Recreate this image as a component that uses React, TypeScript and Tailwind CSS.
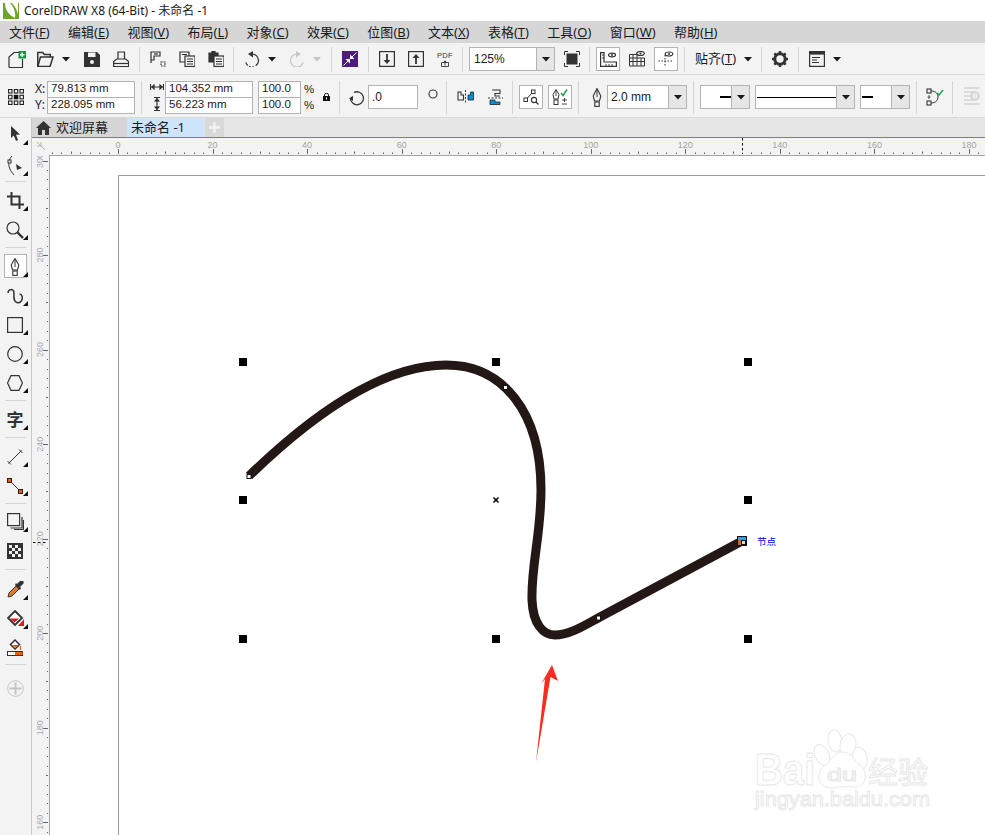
import type { ReactNode } from "react";

const MENUS = [
  ["文件", "F"],
  ["编辑", "E"],
  ["视图", "V"],
  ["布局", "L"],
  ["对象", "C"],
  ["效果", "C"],
  ["位图", "B"],
  ["文本", "X"],
  ["表格", "T"],
  ["工具", "O"],
  ["窗口", "W"],
  ["帮助", "H"],
];

const INK = "#333333";

function Ic({ w = 16, h = 16, className = "", children }: { w?: number; h?: number; className?: string; children: ReactNode }) {
  return (
    <svg width={w} height={h} viewBox={`0 0 ${w} ${h}`} fill="none" stroke={INK} strokeWidth="1.2" className={`shrink-0 ${className}`}>
      {children}
    </svg>
  );
}

function Caret({ className = "", light = false }: { className?: string; light?: boolean }) {
  return (
    <svg width="8" height="5" viewBox="0 0 8 5" className={`shrink-0 ${className}`}>
      <polygon points="0,0 8,0 4,4.5" fill={light ? "#c4c4c4" : "#1a1a1a"} />
    </svg>
  );
}

function VSep({ className = "" }: { className?: string }) {
  return <div className={`h-[25px] w-px shrink-0 bg-[#d4d4d4] ${className}`} />;
}

function VSepTall({ className = "" }: { className?: string }) {
  return <div className={`h-[33px] w-px shrink-0 bg-[#d4d4d4] ${className}`} />;
}

function Combo({ width, btn, className = "", children }: { width: string; btn: string; className?: string; children: ReactNode }) {
  return (
    <div className={`flex h-[24px] shrink-0 border border-[#b3b3b3] bg-white ${width} ${className}`}>
      <div className="flex min-w-0 flex-1 items-center overflow-hidden">{children}</div>
      <div className={`flex items-center justify-center border-l border-[#b3b3b3] bg-[#e6e6e6] ${btn}`}>
        <Caret />
      </div>
    </div>
  );
}

function Boxed({ className = "", children }: { className?: string; children: ReactNode }) {
  return (
    <div className={`flex h-[24px] w-[24px] shrink-0 items-center justify-center border border-[#b3b3b3] bg-white ${className}`}>
      {children}
    </div>
  );
}

function Field({ width, children }: { width: string; children: ReactNode }) {
  return (
    <div className={`flex h-[17px] items-center border border-[#b3b3b3] bg-white pl-[3px] font-['Liberation_Sans',sans-serif] text-[11.5px] leading-none ${width}`}>
      {children}
    </div>
  );
}

function TopToolbar() {
  return (
    <div className="flex h-[32px] shrink-0 items-center border-b border-[#d9d9d9] bg-[#f3f3f3] pt-[1px]">
      <Ic w={18} h={17} className="ml-[8px]">
        <path d="M1 16.5V6l5-4.5h5M14.5 8v8.5H1" />
        <rect x="10.5" y="0" width="7.5" height="7.5" fill="#0b9b3e" stroke="none" />
        <path d="M14.2 1.5v4.5M12 3.7h4.5" stroke="#fff" strokeWidth="1.4" />
      </Ic>
      <Ic w={17} h={16} className="ml-[11px]">
        <path d="M.8 15.5V1.5h5l1.5 2h6v2.5" strokeWidth="1.5" />
        <path d="M.8 15.5 3.5 6h12.5l-3 9.5z" strokeWidth="1.5" />
      </Ic>
      <Caret className="ml-[8px]" />
      <Ic className="ml-[14px]">
        <path d="M0 1h13l3 3v12H0z" fill={INK} stroke="none" />
        <rect x="4" y="1.5" width="7.5" height="4.5" fill="#f3f3f3" stroke="none" />
        <circle cx="8" cy="11" r="2" fill="#f3f3f3" stroke="none" />
      </Ic>
      <Ic className="ml-[13px]">
        <path d="M5 8V1h6.5v7M.6 15.5v-5l3-2.5h9l3 2.5v5z" />
        <path d="M.6 12.5h15" />
      </Ic>
      <VSep className="ml-[10px]" />
      <Ic className="ml-[10px]">
        <path d="M1 1h9v4H4v4H1zM1 9v3" />
        <path d="M4 3h4" />
        <path d="M11 11h4v4h-4z" strokeDasharray="1.6 1" />
      </Ic>
      <Ic className="ml-[13px]">
        <path d="M1 1h9v10H1z" />
        <rect x="6" y="5" width="10" height="10.5" fill="#f3f3f3" />
        <path d="M8 8h6M8 10.5h6M8 13h6M3 3.5h5" />
      </Ic>
      <Ic className="ml-[13px]">
        <path d="M1 2h3V.5h3V2h3v9H1z" fill={INK} />
        <rect x="6" y="5" width="10" height="10.5" fill="#f3f3f3" />
        <path d="M8 8h6M8 10.5h6M8 13h6" />
      </Ic>
      <VSep className="ml-[9px]" />
      <Ic className="ml-[10px]">
        <path d="M8 3a6.5 6.5 0 1 1-6.2 8.5" strokeDasharray="16 2 1.6 1.6 1.6 1.6" />
        <polygon points="9,0 4,3 9,6.5" fill={INK} stroke="none" />
      </Ic>
      <Caret className="ml-[8px]" />
      <Ic className="ml-[13px]">
        <g stroke="#c6c6c6">
          <path d="M8 3a6.5 6.5 0 1 0 6.2 8.5" />
        </g>
        <polygon points="7,0 12,3 7,6.5" fill="#c6c6c6" stroke="none" />
      </Ic>
      <Caret light className="ml-[8px]" />
      <VSep className="ml-[10px]" />
      <svg width="16" height="16" viewBox="0 0 16 16" className="ml-[10px] shrink-0">
        <rect width="16" height="16" fill="#4d1c7c" />
        <path d="M1.5 14.5 14.5 1.5" stroke="#fff" strokeWidth="1" />
        <path d="M8 3.5V8h4.5zM8 12.5V8H3.5z" fill="#fff" />
      </svg>
      <VSep className="ml-[10px]" />
      <Ic className="ml-[10px]">
        <rect x=".6" y=".6" width="14.8" height="14.8" />
        <path d="M8 3v7" strokeWidth="1.8" />
        <polygon points="4.5,9 11.5,9 8,13" fill={INK} stroke="none" />
      </Ic>
      <Ic className="ml-[13px]">
        <rect x=".6" y=".6" width="14.8" height="14.8" />
        <path d="M8 6v7" strokeWidth="1.8" />
        <polygon points="4.5,7 11.5,7 8,3" fill={INK} stroke="none" />
      </Ic>
      <div className="ml-[13px] flex w-[16px] shrink-0 flex-col items-center">
        <span className="font-['Liberation_Sans',sans-serif] text-[7.5px] leading-[9px] tracking-[0.4px] text-[#333]">PDF</span>
        <Ic w={8} h={7}>
          <path d="M.5 2.5h7v4h-7zM4 .5v5M2 3l2-2 2 2" strokeWidth=".9" />
        </Ic>
      </div>
      <VSep className="ml-[9px]" />
      <Combo width="w-[86px]" btn="w-[18px]" className="ml-[6px]">
        <span className="pl-[4px] font-['Liberation_Sans',sans-serif] text-[12px]">125%</span>
      </Combo>
      <svg width="16" height="16" viewBox="0 0 16 16" className="ml-[9px] shrink-0" fill="none" stroke={INK}>
        <path d="M.5 4V.5H4M12 .5h3.5V4M15.5 12v3.5H12M4 15.5H.5V12" />
        <rect x="2.5" y="2.5" width="11" height="11" fill={INK} stroke="none" />
      </svg>
      <VSep className="ml-[9px]" />
      <Boxed className="ml-[6px]">
        <Ic w={17} h={15}>
          <path d="M.6.6h3.4v9.4h12.4v4.4H.6z" />
          <path d="M2 3h2M2 6h2M6 12v2M9 12v2M12 12v2" strokeWidth=".9" />
          <ellipse cx="12" cy="3" rx="3.5" ry="1.8" />
          <circle cx="12" cy="3" r="1" fill={INK} stroke="none" />
        </Ic>
      </Boxed>
      <Ic w={16} h={16} className="ml-[9px]">
        <path d="M.5 3.5h9M.5 7h15M.5 10.5h15M.5 15h15M.5 3.5V15M4 3.5V15M8 3.5V15M12 7V15M15.5 7V15" strokeWidth="1" />
        <ellipse cx="11.5" cy="2.5" rx="3.8" ry="2" fill="#f3f3f3" />
        <circle cx="11.5" cy="2.5" r="1" fill={INK} stroke="none" />
      </Ic>
      <Boxed className="ml-[9px]">
        <Ic w={16} h={16}>
          <path d="M.5 10h15M7 4v12" strokeDasharray="1.5 1.5" strokeWidth="1" />
          <ellipse cx="11" cy="3" rx="3.8" ry="2" />
          <circle cx="11" cy="3" r="1" fill={INK} stroke="none" />
        </Ic>
      </Boxed>
      <VSep className="ml-[6px]" />
      <span className="ml-[10px] w-[41px] shrink-0 text-[13px] whitespace-nowrap">
        贴齐(<span className="underline">T</span>)
      </span>
      <Caret className="ml-[8px]" />
      <VSep className="ml-[9px]" />
      <svg width="16" height="16" viewBox="0 0 16 16" className="ml-[10px] shrink-0">
        <circle cx="8" cy="8" r="5.2" fill="none" stroke="#333" strokeWidth="3" />
        <path d="M8 0v3M8 13v3M0 8h3M13 8h3M2.3 2.3l2.2 2.2M11.5 11.5l2.2 2.2M13.7 2.3l-2.2 2.2M4.5 11.5l-2.2 2.2" stroke="#333" strokeWidth="2.4" />
      </svg>
      <VSep className="ml-[10px]" />
      <Ic className="ml-[10px]">
        <rect x=".6" y=".6" width="14.8" height="14.8" />
        <rect x=".6" y=".6" width="14.8" height="3" fill={INK} stroke="none" />
        <path d="M3 6.5h8M3 9h5M3 11.5h7" />
      </Ic>
      <Caret className="ml-[8px]" />
    </div>
  );
}

function PropertyBar() {
  return (
    <div className="flex h-[43px] shrink-0 items-center overflow-hidden border-b border-[#d9d9d9] bg-[#f3f3f3] pt-[2px]">
      <svg width="16" height="16" viewBox="0 0 16 16" className="ml-[8px] shrink-0">
        <g fill="none" stroke="#222" strokeWidth="1.1">
          <rect x=".5" y=".5" width="3.5" height="3.5" />
          <rect x="6.3" y=".5" width="3.5" height="3.5" />
          <rect x="12" y=".5" width="3.5" height="3.5" />
          <rect x=".5" y="6.3" width="3.5" height="3.5" />
          <rect x="12" y="6.3" width="3.5" height="3.5" />
          <rect x=".5" y="12" width="3.5" height="3.5" />
          <rect x="6.3" y="12" width="3.5" height="3.5" />
          <rect x="12" y="12" width="3.5" height="3.5" />
        </g>
        <rect x="5.8" y="5.8" width="4.5" height="4.5" fill="#111" />
      </svg>
      <div className="ml-[11px] flex w-[12px] shrink-0 flex-col text-[12px] leading-[16px]">
        <span>X:</span>
        <span>Y:</span>
      </div>
      <div className="flex shrink-0 flex-col">
        <Field width="w-[88px]">79.813 mm</Field>
        <Field width="w-[88px] -mt-px">228.095 mm</Field>
      </div>
      <VSepTall className="ml-[6px]" />
      <div className="ml-[8px] flex w-[14px] shrink-0 flex-col items-center gap-[7px]">
        <Ic w={14} h={6}>
          <path d="M.5 0v6M13.5 0v6M1 3h12" />
          <path d="M2 3l2-2v4zM12 3l-2-2v4z" fill={INK} />
        </Ic>
        <Ic w={6} h={14}>
          <path d="M0 .5h6M0 13.5h6M3 1v12" />
          <path d="M3 2 1 4h4zM3 12 1 10h4z" fill={INK} />
        </Ic>
      </div>
      <div className="ml-[1px] flex shrink-0 flex-col">
        <Field width="w-[88px]">104.352 mm</Field>
        <Field width="w-[88px] -mt-px">56.223 mm</Field>
      </div>
      <div className="ml-[5px] flex shrink-0 flex-col">
        <Field width="w-[43px]">100.0</Field>
        <Field width="w-[43px] -mt-px">100.0</Field>
      </div>
      <div className="ml-[3px] flex w-[10px] shrink-0 flex-col font-['Liberation_Sans',sans-serif] text-[11.5px] leading-[16px]">
        <span>%</span>
        <span>%</span>
      </div>
      <svg width="7" height="8" viewBox="0 0 7 8" className="ml-[9px] shrink-0">
        <rect y="3" width="7" height="5" fill="#111" />
        <path d="M1.5 3.5V1.8a2 1.5 0 0 1 4 0V3.5" fill="none" stroke="#111" />
        <rect x="3" y="4.5" width="1" height="2" fill="#fff" />
      </svg>
      <VSepTall className="ml-[9px]" />
      <Ic w={17} h={17} className="ml-[9px]">
        <path d="M5 3.5a6.5 6.5 0 1 1-3.5 6" strokeWidth="1.3" />
        <polygon points="0,9.5 4,6.8 4,12" fill={INK} stroke="none" />
      </Ic>
      <div className="ml-[2px] flex h-[24px] w-[50px] shrink-0 items-center border border-[#b3b3b3] bg-white pl-[3px] font-['Liberation_Sans',sans-serif] text-[12px]">.0</div>
      <svg width="10" height="10" viewBox="0 0 10 10" className="mb-[7px] ml-[10px] shrink-0">
        <circle cx="5" cy="5" r="4" fill="none" stroke="#333" strokeWidth="1.1" />
      </svg>
      <VSepTall className="ml-[8px]" />
      <Ic w={17} h={16} className="ml-[10px]">
        <path d="M1 3h3v3h2.5v5H1z" strokeWidth="1.1" />
        <path d="M8.5 1v14" strokeDasharray="2 1.5" strokeWidth="1" />
        <path d="M11 11V6h2.500V3h3v8z" fill="#0a8fdc" stroke="#222" strokeWidth=".8" />
      </Ic>
      <Ic w={17} h={16} className="ml-[13px]">
        <path d="M5 1h8v3.5H8V7h5" strokeWidth="1.1" />
        <path d="M1 9h15" strokeDasharray="2 1.5" strokeWidth="1" />
        <path d="M3 11h5v2h5v2.5H3z" fill="#0a8fdc" stroke="#222" strokeWidth=".8" />
      </Ic>
      <VSepTall className="ml-[8px]" />
      <Boxed className="ml-[6px]">
        <Ic w={16} h={16}>
          <rect x="1" y="9" width="3.5" height="3.5" strokeWidth="1" />
          <rect x="8.5" y="1" width="3.5" height="3.5" strokeWidth="1" />
          <path d="M4.5 9 8.5 4.5" strokeWidth="1" />
          <circle cx="11" cy="11" r="2.6" strokeWidth="1.1" />
          <path d="M13 13l2.500 2.500" strokeWidth="1.3" />
        </Ic>
      </Boxed>
      <Boxed className="ml-[5px]">
        <Ic w={18} h={18}>
          <path d="M5 1.5 8 6.5 7 11H3L2 6.5z" strokeWidth="1" />
          <path d="M5 2v6" strokeWidth=".9" />
          <rect x="3" y="12" width="4" height="4.5" strokeWidth="1" />
          <path d="M10 5l2 2.500 4-6" stroke="#13a04a" strokeWidth="1.4" />
          <path d="M11 12h5M13.5 10v4M11 16h5" strokeWidth=".9" />
        </Ic>
      </Boxed>
      <VSepTall className="ml-[6px]" />
      <Ic w={10} h={19} className="ml-[13px]">
        <path d="M5 .5 8.8 8 7.5 13h-5L1.2 8z" strokeWidth="1.1" />
        <path d="M5 2v7" strokeWidth="1" />
        <rect x="2.8" y="14" width="4.4" height="4.4" strokeWidth="1.1" />
      </Ic>
      <Combo width="w-[80px]" btn="w-[18px]" className="ml-[5px]">
        <span className="pl-[3px] font-['Liberation_Sans',sans-serif] text-[12px] whitespace-nowrap">2.0 mm</span>
      </Combo>
      <VSepTall className="ml-[6px]" />
      <Combo width="w-[50px]" btn="w-[18px]" className="ml-[6px]">
        <div className="ml-auto h-[2px] w-[11px] bg-black" />
      </Combo>
      <Combo width="w-[100px]" btn="w-[18px]" className="ml-[5px]">
        <div className="ml-[1px] h-[1px] w-full bg-black" />
      </Combo>
      <Combo width="w-[50px]" btn="w-[18px]" className="ml-[5px]">
        <div className="ml-[1px] h-[2px] w-[11px] bg-black" />
      </Combo>
      <VSepTall className="ml-[6px]" />
      <Ic w={18} h={18} className="ml-[9px]">
        <rect x="1" y="1" width="4" height="4" strokeWidth="1.1" />
        <rect x="1" y="13" width="4" height="4" strokeWidth="1.1" />
        <path d="M5 3c5 0 7 3 7 6s-2 6-7 6" strokeWidth="1" />
        <path d="M3 7v4M1.5 9h3" strokeWidth=".8" />
        <path d="M11 5l2 2 4-5" stroke="#13a04a" strokeWidth="1.4" />
      </Ic>
      <VSepTall className="ml-[8px]" />
      <div className="relative ml-[10px] h-[20px] w-[21px] shrink-0">
        <svg width="21" height="20" viewBox="0 0 21 20" fill="none" stroke="#c4c4c4" strokeWidth="1.1">
          <path d="M1 1h16M1 5h10M1 9h7M1 13h10M1 17h16" />
          <circle cx="12" cy="9" r="4" fill="#e8e8e8" />
        </svg>
      </div>
    </div>
  );
}

function Tool({ corner = true, className = "", children }: { corner?: boolean; className?: string; children: ReactNode }) {
  return (
    <div className={`relative flex h-[29px] shrink-0 items-center justify-center pr-[1px] ${className}`}>
      {children}
      {corner && (
        <svg width="5" height="5" viewBox="0 0 5 5" className="absolute right-[3px] bottom-[4px]">
          <polygon points="5,0 5,5 0,5" fill="#111" />
        </svg>
      )}
    </div>
  );
}

function LeftSep({ className = "" }: { className?: string }) {
  return <div className={`mx-[5px] h-px shrink-0 bg-[#d6d6d6] ${className}`} />;
}

function LeftToolbar() {
  return (
    <div className="flex w-[32px] shrink-0 flex-col border-r border-[#c8c8c8] bg-[#f3f3f3] pt-[2px]">
      <Tool>
        <Ic w={10} h={17}>
          <polygon points="1,0 1,12 3.8,9.5 6,15 8,14 6,8.8 10,8.5" fill={INK} stroke="none" />
        </Ic>
      </Tool>
      <Tool className="mt-[2px]">
        <Ic w={18} h={20}>
          <path d="M6 0C3 3 2 8 3.5 12c1 3 3 5 4.5 7" strokeWidth="1" />
          <rect x="2" y="4" width="3" height="3" fill="#f3f3f3" strokeWidth="1" />
          <polygon points="10,8 16,12 11,14" fill={INK} stroke="none" />
        </Ic>
      </Tool>
      <LeftSep className="mt-[1px]" />
      <Tool className="mt-[4px]">
        <Ic w={17} h={17}>
          <path d="M4.5 0v12.500H17M0 4.500h12.500V17" strokeWidth="2" />
        </Ic>
      </Tool>
      <Tool>
        <Ic w={18} h={18}>
          <circle cx="7" cy="7" r="6" strokeWidth="1.2" />
          <path d="M11.5 11.5 17 17" strokeWidth="2.4" />
        </Ic>
      </Tool>
      <LeftSep className="mt-[3px]" />
      <Tool className="mt-[4px]">
        <div className="absolute inset-x-[4px] top-[2px] h-[24px] border border-[#b3b3b3] bg-white" />
        <Ic w={10} h={18} className="relative">
          <path d="M5 .5 8.8 7 7.5 12h-5L1.2 7z" strokeWidth="1.1" />
          <path d="M5 2v7" strokeWidth="1" />
          <rect x="2.8" y="13" width="4.4" height="4.4" strokeWidth="1.1" />
        </Ic>
      </Tool>
      <Tool>
        <Ic w={16} h={16}>
          <path d="M1 5C1 1 7 0 7 5C7 9 6 13 10 14.500C14 16 16 11 15 8C14.500 6.500 13.500 6 12.500 6" strokeWidth="1.5" />
        </Ic>
      </Tool>
      <Tool>
        <Ic w={16} h={16}>
          <rect x=".6" y=".6" width="14.8" height="14.8" strokeWidth="1.2" />
        </Ic>
      </Tool>
      <Tool>
        <Ic w={16} h={16}>
          <circle cx="8" cy="8" r="7.3" strokeWidth="1.2" />
        </Ic>
      </Tool>
      <Tool>
        <Ic w={16} h={16}>
          <polygon points="4,.7 12,.7 15.5,8 12,15.3 4,15.3 .5,8" strokeWidth="1.2" />
        </Ic>
      </Tool>
      <LeftSep className="mt-[3px]" />
      <Tool className="mt-[4px]">
        <span className="text-[17px] leading-none font-bold text-[#333]">字</span>
      </Tool>
      <LeftSep className="mt-[3px]" />
      <Tool className="mt-[4px]">
        <Ic w={16} h={16}>
          <path d="M1.5 14.5 14.5 1.5" strokeWidth="1" />
          <path d="M12 .5l3.500 3.500M.5 12 4 15.500" strokeWidth="1" />
        </Ic>
      </Tool>
      <Tool>
        <svg width="16" height="16" viewBox="0 0 16 16" className="shrink-0">
          <path d="M3 3 13 13" stroke="#333" strokeWidth="1" />
          <rect x=".5" y=".5" width="4" height="4" fill="#f15a0a" stroke="#222" />
          <rect x="11.5" y="11.5" width="4" height="4" fill="#f15a0a" stroke="#222" />
        </svg>
      </Tool>
      <LeftSep className="mt-[3px]" />
      <Tool className="mt-[3px]">
        <Ic w={17} h={17}>
          <rect x=".6" y=".6" width="12" height="12" strokeWidth="1.2" />
          <path d="M15 4v11H3.500M16.500 7v9.500H7" strokeWidth="1.2" />
        </Ic>
      </Tool>
      <Tool corner={false}>
        <svg width="16" height="16" viewBox="0 0 16 16" className="shrink-0">
          <rect width="16" height="16" fill="#333" />
          <path d="M2 2h3v3H2zM8 2h3v3H8zM5 5h3v3H5zM11 5h3v3h-3zM2 8h3v3H2zM8 8h3v3H8zM5 11h3v3H5zM11 11h3v3h-3z" fill="#f3f3f3" />
        </svg>
      </Tool>
      <LeftSep className="mt-[4px]" />
      <Tool className="mt-[5px]">
        <svg width="17" height="17" viewBox="0 0 17 17" className="shrink-0">
          <path d="M1 16l1-4 7-7 3 3-7 7z" fill="#e8762c" stroke="#333" strokeWidth="1" />
          <path d="M8 4l5 5 1-2-1-1 3-3a2 2 0 0 0-3-3l-3 3-1-1z" fill="#333" />
        </svg>
      </Tool>
      <Tool>
        <svg width="17" height="17" viewBox="0 0 17 17" className="shrink-0">
          <polygon points="8,1 15,8 8,15 1,8" fill="#fff" stroke="#333" strokeWidth="1.8" />
          <polygon points="3,8.5 12,8.5 7.5,12.5" fill="#e8101a" />
          <polygon points="17,9 17,16 11,16" fill="#f2101a" />
        </svg>
      </Tool>
      <Tool corner={false}>
        <svg width="16" height="18" viewBox="0 0 16 18" className="shrink-0">
          <polygon points="8,1 12.5,5.5 8,10 3.5,5.5" fill="#fff" stroke="#333" strokeWidth="1.5" />
          <path d="M5 6h6l-3 2.500z" fill="#f15a0a" />
          <path d="M13.5 7v4" stroke="#f15a0a" />
          <rect x=".5" y="12.5" width="15" height="4" fill="#fff" stroke="#333" />
          <rect x="8" y="13" width="7.5" height="3" fill="#f15a0a" />
        </svg>
      </Tool>
      <LeftSep className="mt-[2px]" />
      <Tool corner={false} className="mt-[9px]">
        <svg width="17" height="17" viewBox="0 0 17 17" className="shrink-0" fill="none" stroke="#c4c4c4">
          <circle cx="8.5" cy="8.5" r="7.8" strokeWidth="1" />
          <path d="M8.5 2.500v12M2.500 8.500h12" strokeWidth="2" />
        </svg>
      </Tool>
    </div>
  );
}

function Tabs() {
  return (
    <div className="flex h-[20px] shrink-0 border-b border-[#1f9be3] bg-[#e6e6e6]">
      <div className="flex w-[95px] items-center bg-[#d6d6d6] pl-[4px]">
        <svg width="15" height="14" viewBox="0 0 15 14" className="shrink-0">
          <path d="M7.5 0 0 7h2v7h4V9h3v5h4V7h2z" fill="#333" />
        </svg>
        <span className="ml-[5px] text-[13px] leading-none whitespace-nowrap">欢迎屏幕</span>
      </div>
      <div className="flex w-[77px] items-center bg-[#cde4fb] pl-[4px] text-[13px] leading-none whitespace-nowrap">未命名 -1</div>
      <div className="ml-px flex w-[19px] items-center justify-center bg-[#d9d9d9]">
        <svg width="11" height="11" viewBox="0 0 11 11">
          <path d="M5.5 0v11M0 5.5h11" stroke="#f3f3f3" strokeWidth="2.4" />
        </svg>
      </div>
    </div>
  );
}

const PX_PER_MM = 4.7275;
const X0 = 118;
const Y300 = 160.5;

function HRuler() {
  const ticks = [];
  for (let mm = -14; mm <= 184; mm += 2) {
    const x = Math.round(X0 + mm * PX_PER_MM) + 0.5;
    const major = mm % 20 === 0;
    const mid = mm % 10 === 0;
    ticks.push(<path key={mm} d={`M${x} ${major ? 149 : mid ? 151.5 : 152.5}V154`} stroke="#666" strokeWidth="1" />);
  }
  const labels = [0, 20, 40, 60, 80, 100, 120, 140, 160, 180];
  return (
    <svg width="953" height="18" viewBox="32 138 953 18" className="block shrink-0 bg-[#f3f3f3]">
      <g>{ticks}</g>
      {labels.map((n) => (
        <text key={n} x={X0 + n * PX_PER_MM} y="148" textAnchor="middle" fontSize="9" fill="#a3a3a3" fontFamily="Liberation Sans, sans-serif">
          {n}
        </text>
      ))}
      <path d="M742.5 138v16" stroke="#111" strokeDasharray="2.5 2.5" />
      <rect x="49" y="155" width="936" height="1" fill="#a6a6a6" />
      <path d="M37 142l8 8M41 142v4M37 146h4" stroke="#b5b5b5" strokeWidth="1" />
    </svg>
  );
}

function VRuler() {
  const ticks = [];
  for (let mm = 300; mm >= 150; mm -= 2) {
    const y = Math.round(Y300 + (300 - mm) * PX_PER_MM) + 0.5;
    const major = mm % 20 === 0;
    const mid = mm % 10 === 0;
    ticks.push(<path key={mm} d={`M${major ? 43 : mid ? 46 : 47} ${y}H48`} stroke="#666" strokeWidth="1" />);
  }
  const labels = [300, 280, 260, 240, 220, 200, 180, 160];
  return (
    <svg width="18" height="679" viewBox="32 156 18 679" className="block shrink-0 bg-[#f3f3f3]">
      <g>{ticks}</g>
      {labels.map((n) => {
        const y = Y300 + (300 - n) * PX_PER_MM;
        return (
          <text key={n} transform={`translate(43 ${y}) rotate(-90)`} textAnchor="middle" fontSize="9" fill="#a9a9b8" fontFamily="Liberation Sans, sans-serif">
            {n}
          </text>
        );
      })}
      <path d="M33 542.5h15" stroke="#111" strokeDasharray="2.5 2.5" />
      <rect x="49" y="156" width="1" height="679" fill="#a6a6a6" />
    </svg>
  );
}

function Handle({ x, y }: { x: number; y: number }) {
  return <rect x={x - 4} y={y - 4} width="8" height="8" fill="#000" />;
}

function Node({ x, y }: { x: number; y: number }) {
  return <rect x={x - 2} y={y - 2} width="4" height="4" fill="#fff" stroke="#111" strokeWidth="1" />;
}

function Drawing() {
  return (
    <svg width="935" height="679" viewBox="50 156 935 679" className="block flex-1 bg-white">
      <path d="M118.5 835V175.5H985" fill="none" stroke="#9a9a9a" strokeWidth="1" />
      <path
        d="M249 476C315 412 385 365 446 365C503 365 541 412 541 490C541 535 531 565 532 600C533 624 543 635 555 635C570 635 585 625 600 617L742 541"
        fill="none"
        stroke="#231815"
        strokeWidth="9"
      />
      <Handle x={243} y={362} />
      <Handle x={496} y={362} />
      <Handle x={748} y={362} />
      <Handle x={243} y={500} />
      <Handle x={748} y={500} />
      <Handle x={243} y={639} />
      <Handle x={496} y={639} />
      <Handle x={748} y={639} />
      <path d="M493.5 497.5l5 5M498.5 497.5l-5 5" stroke="#000" strokeWidth="1.5" />
      <Node x={249} y={476.5} />
      <Node x={505.5} y={387.5} />
      <Node x={598.5} y={618} />
      <rect x="737" y="536" width="10" height="10" fill="#111" />
      <rect x="738" y="537" width="8" height="3" fill="#2aa4e0" />
      <rect x="738" y="540" width="3" height="5" fill="#c86a2a" />
      <rect x="742" y="541" width="3" height="3" fill="#d8d8e8" />
      <text x="757" y="545" fontSize="9.5" fill="#0000e6" fontFamily="Noto Sans CJK SC, sans-serif">
        节点
      </text>
      <polygon points="552,665 558,681 550.5,677 536,762 545,679 541,684" fill="#fb2b1f" />
      <g fill="#fff" stroke="#e8e8e8" strokeWidth="1">
        <ellipse cx="835" cy="741" rx="7" ry="11" transform="rotate(-8 835 741)" />
        <ellipse cx="848" cy="745" rx="8" ry="11" transform="rotate(8 848 745)" />
        <ellipse cx="822" cy="755" rx="7" ry="11" transform="rotate(-25 822 755)" />
        <ellipse cx="860" cy="758" rx="7" ry="11" transform="rotate(-12 860 758)" />
        <path d="M842 752c-8 0-10 9-18 14-8 5-8 22 8 22 7 0 13-3 20-1 14 2 17-14 9-21-8-5-9-14-19-14z" />
        <text x="755" y="785" fontSize="44" fontWeight="bold" fontFamily="Liberation Sans, sans-serif" textLength="60" lengthAdjust="spacingAndGlyphs">
          Bai
        </text>
        <text x="827" y="781" fontSize="18" fontFamily="Liberation Sans, sans-serif" textLength="30" lengthAdjust="spacingAndGlyphs">
          du
        </text>
        <text x="868" y="783" fontSize="30" fontFamily="Noto Sans CJK SC, sans-serif" textLength="60" lengthAdjust="spacingAndGlyphs">
          经验
        </text>
        <text x="755" y="806" fontSize="21" fontFamily="Liberation Sans, sans-serif" textLength="175" lengthAdjust="spacingAndGlyphs">
          jingyan.baidu.com
        </text>
      </g>
    </svg>
  );
}

export default function App() {
  return (
    <div className="flex h-[835px] w-[985px] flex-col overflow-hidden bg-white font-['Noto_Sans','Noto_Sans_CJK_SC',sans-serif] text-[#1a1a1a]">
      <div className="flex h-[21px] shrink-0 items-center bg-white pl-[3px]">
        <svg width="16" height="16" viewBox="0 0 16 16" className="shrink-0">
          <rect width="16" height="16" fill="#6ea62b" />
          <path d="M2 0c0 7 4 12 10 15 1-5-1-11-5-15zM9 0c3 3 5 7 6 11V0z" fill="#fff" />
        </svg>
        <span className="ml-[5px] text-[12px] leading-none whitespace-nowrap">CorelDRAW X8 (64-Bit) - 未命名 -1</span>
      </div>
      <div className="flex h-[22px] shrink-0 items-center gap-[18.4px] bg-[#d6d6d6] pl-[9px] text-[13px] leading-none">
        {MENUS.map(([label, key]) => (
          <span key={label} className="whitespace-nowrap">
            {label}(<span className="underline">{key}</span>)
          </span>
        ))}
      </div>
      <TopToolbar />
      <PropertyBar />
      <div className="flex min-h-0 flex-1">
        <LeftToolbar />
        <div className="flex min-w-0 flex-1 flex-col">
          <Tabs />
          <HRuler />
          <div className="flex min-h-0 flex-1">
            <VRuler />
            <Drawing />
          </div>
        </div>
      </div>
    </div>
  );
}
